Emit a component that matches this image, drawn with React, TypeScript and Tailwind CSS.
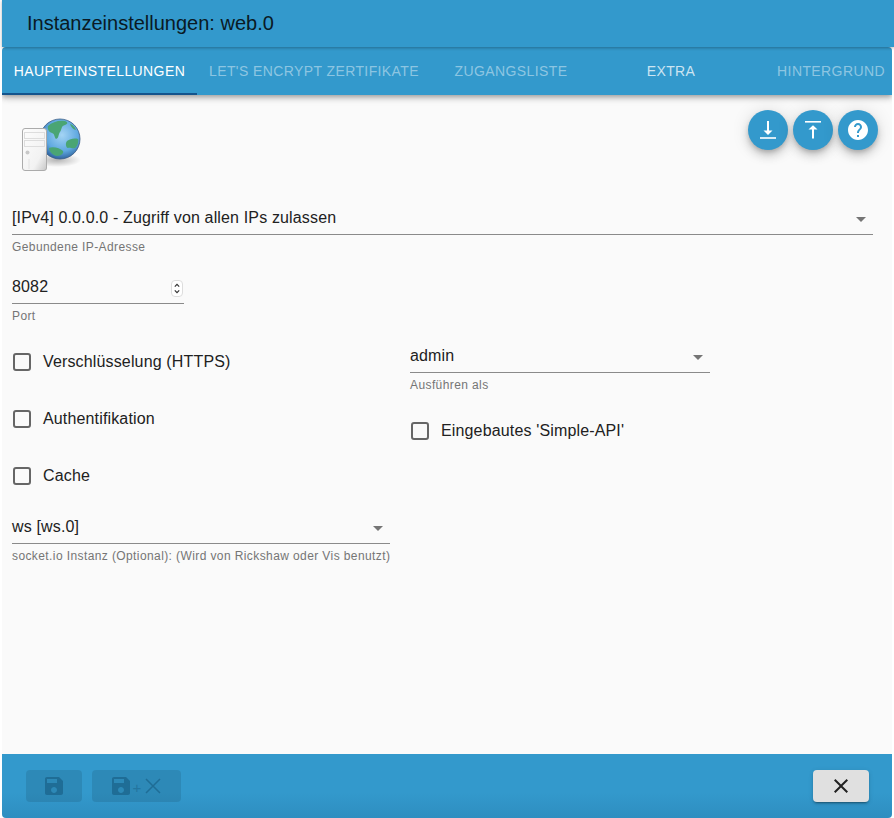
const SAVE = "M17 3H5c-1.11 0-2 .9-2 2v14c0 1.1.89 2 2 2h14c1.1 0 2-.9 2-2V7l-4-4zm-5 16c-1.66 0-3-1.34-3-3s1.34-3 3-3 3 1.34 3 3-1.34 3-3 3zm3-10H5V5h10v4z";
const CLOSE = "M19 6.41 17.59 5 12 10.59 6.41 5 5 6.41 10.59 12 5 17.59 6.41 19 12 13.41 17.59 19 19 17.59 13.41 12z";
const HELP = "M12 2C6.48 2 2 6.48 2 12s4.48 10 10 10 10-4.48 10-10S17.52 2 12 2zm1 17h-2v-2h2v2zm2.07-7.75l-.9.92C13.45 12.9 13 13.5 13 15h-2v-.5c0-1.1.45-2.1 1.17-2.83l1.24-1.26c.37-.36.59-.86.59-1.41 0-1.1-.9-2-2-2s-2 .9-2 2H8c0-2.21 1.79-4 4-4s4 1.79 4 4c0 .88-.36 1.68-.93 2.25z";

function Icon({ d, className }: { d: string; className?: string }) {
  return (
    <svg viewBox="0 0 24 24" className={className} fill="currentColor">
      <path d={d} />
    </svg>
  );
}

function Logo() {
  return (
    <svg width="60" height="56" viewBox="0 0 60 56" className="block">
      <defs>
        <radialGradient id="sea" cx="0.55" cy="0.4" r="0.62">
          <stop offset="0" stopColor="#a4d4f4" />
          <stop offset="0.65" stopColor="#5fa8e0" />
          <stop offset="1" stopColor="#2c5f9a" />
        </radialGradient>
        <linearGradient id="case" x1="0" y1="0" x2="1" y2="1">
          <stop offset="0" stopColor="#fdfdfd" />
          <stop offset="0.7" stopColor="#f2f2f2" />
          <stop offset="1" stopColor="#c6c6c6" />
        </linearGradient>
        <radialGradient id="shade" cx="0.5" cy="0.5" r="0.5">
          <stop offset="0" stopColor="#000" stopOpacity="0.28" />
          <stop offset="1" stopColor="#000" stopOpacity="0" />
        </radialGradient>
      </defs>
      <ellipse cx="36" cy="43" rx="24" ry="7" fill="url(#shade)" />
      <circle cx="39" cy="22" r="20" fill="url(#sea)" stroke="#3f5f86" strokeWidth="0.8" />
      <path d="M27 9c4-4 11-6 17-5 3 1 3 3 0 4-4 1-3 4-5 7-2 3-1 6-4 7-2-2-1-5-4-6-3-1-5-4-4-7z" fill="#4aa574" />
      <path d="M46 24c3-2 7-3 11-2 1 3-1 8-3 9-3 1-5-1-7 0-2 0-3-5-1-7z" fill="#4aa574" />
      <path d="M28 31c4-2 11 0 14 3 1 2-2 5-6 5-3 0-8-4-8-8z" fill="#4aa574" />
      <path d="M49 7c2 0 5 3 6 6-2 0-5-3-6-6z" fill="#4aa574" />
      <rect x="1.5" y="11.5" width="24" height="42" rx="2.5" fill="url(#case)" stroke="#ababab" />
      <rect x="3.5" y="15.5" width="20" height="6" fill="none" stroke="#dddddd" />
      <rect x="3.5" y="23.5" width="20" height="6" fill="none" stroke="#dddddd" />
      <circle cx="6.5" cy="35.5" r="2" fill="#c8c8c8" />
      <path d="M8 42v10" stroke="#e2e2e2" />
    </svg>
  );
}

function Field({ label, value, width, select, stepper }: { label: string; value: string; width: string; select?: boolean; stepper?: boolean }) {
  return (
    <div className={width}>
      <div className="relative h-[32px] border-b border-[#8a8a8a] flex items-center text-[16px] tracking-[0.15px] text-[#212121]">
        <span className="pb-[2px]">{value}</span>
        {select && <span className="absolute right-[7px] top-[14px] w-0 h-0 border-x-[5px] border-x-transparent border-t-[5px] border-t-[#757575]" />}
        {stepper && (
          <svg width="14" height="17" viewBox="0 0 14 17" className="absolute right-0 top-[8px]">
            <rect x="1.5" y="0.5" width="11" height="16" rx="3.5" fill="#fff" stroke="#dddddd" />
            <path d="M4.8 6.6 7 4.4l2.2 2.2M4.8 10.4 7 12.6l2.2-2.2" fill="none" stroke="#333" strokeWidth="1.2" />
          </svg>
        )}
      </div>
      <div className="mt-[4px] whitespace-nowrap text-[12px] leading-[16px] tracking-[0.4px] text-[#757575]">{label}</div>
    </div>
  );
}

function Check({ label }: { label: string }) {
  return (
    <div className="flex items-center h-[24px]">
      <span className="ml-[1px] w-[18px] h-[18px] border-2 border-[#666666] rounded-[3px]" />
      <span className="ml-[12px] text-[16px] tracking-[0.15px] text-[#212121]">{label}</span>
    </div>
  );
}

function Fab({ children }: { children: React.ReactNode }) {
  return (
    <div className="w-[40px] h-[40px] rounded-full bg-[#3399cc] text-white flex items-center justify-center shadow-[0_3px_5px_-1px_rgba(0,0,0,0.2),0_6px_10px_0_rgba(0,0,0,0.14),0_1px_18px_0_rgba(0,0,0,0.12)]">
      {children}
    </div>
  );
}

function Tab({ label, className }: { label: string; className: string }) {
  return (
    <div className={`shrink-0 h-[48px] flex items-center justify-center text-[14px] tracking-[0.4px] uppercase ${className}`}>
      {label}
    </div>
  );
}

export default function App() {
  return (
    <div className="w-[894px] h-[818px] overflow-hidden bg-white flex flex-col font-['Liberation_Sans',Arial,sans-serif]">
      <div className="relative z-20 ml-[2px] h-[47px] shrink-0 bg-[#3399cc] flex items-center pl-[25px] text-[20px] text-[#0a1a24] pb-[1px] shadow-[0_1px_3px_rgba(0,0,0,0.3)]">
        Instanzeinstellungen: web.0
      </div>
      <div className="relative ml-[2px] mr-[2px] flex-1 min-h-0 flex flex-col bg-[#fafafa] rounded-[4px] overflow-hidden">
        <div className="relative z-10 h-[48px] shrink-0 bg-[#3399cc] flex overflow-hidden shadow-[0_2px_4px_-1px_rgba(0,0,0,0.2),0_4px_5px_0_rgba(0,0,0,0.14),0_1px_10px_0_rgba(0,0,0,0.12)]">
          <Tab label="Haupteinstellungen" className="w-[195px] text-white border-b-2 border-[#14548c] pt-[2px]" />
          <Tab label="Let's Encrypt Zertifikate" className="w-[234px] text-white/45" />
          <Tab label="Zugangsliste" className="w-[160px] text-white/45" />
          <Tab label="Extra" className="w-[160px] text-white/75" />
          <Tab label="Hintergrund" className="w-[160px] text-white/45" />
        </div>
        <div className="flex-1 min-h-0 flex flex-col px-[10px]">
          <div className="flex justify-between pt-[15px] pr-[4px]">
            <div className="pl-[9px] pt-[7px]">
              <Logo />
            </div>
            <div className="flex gap-[5px]">
              <Fab>
                <svg width="24" height="24" viewBox="0 0 24 24" fill="white">
                  <path d="M11 3h2v10.5h-2z" />
                  <path d="M7.5 12.6h9L12 17z" />
                  <rect x="4" y="19.2" width="16" height="1.6" />
                </svg>
              </Fab>
              <Fab>
                <svg width="24" height="24" viewBox="0 0 24 24" fill="white">
                  <rect x="4" y="3" width="16" height="1.6" />
                  <path d="M7.5 11.6h9L12 7.2z" />
                  <path d="M11 10.5h2V20.6h-2z" />
                </svg>
              </Fab>
              <Fab>
                <Icon d={HELP} className="w-[24px] h-[24px]" />
              </Fab>
            </div>
          </div>
          <div className="mt-[30px]">
            <Field label="Gebundene IP-Adresse" value="[IPv4] 0.0.0.0 - Zugriff von allen IPs zulassen" width="w-[861px]" select />
          </div>
          <div className="mt-[17px]">
            <Field label="Port" value="8082" width="w-[172px]" stepper />
          </div>
          <div className="flex mt-[17px]">
            <div className="w-[398px] flex flex-col">
              <div className="pt-[9px]">
                <Check label="Verschlüsselung (HTTPS)" />
              </div>
              <div className="mt-[33px]">
                <Check label="Authentifikation" />
              </div>
              <div className="mt-[33px]">
                <Check label="Cache" />
              </div>
              <div className="mt-[24px]">
                <Field label="socket.io Instanz (Optional): (Wird von Rickshaw oder Vis benutzt)" value="ws [ws.0]" width="w-[378px]" select />
              </div>
            </div>
            <div className="flex flex-col">
              <Field label="Ausführen als" value="admin" width="w-[300px]" select />
              <div className="mt-[26px]">
                <Check label="Eingebautes 'Simple-API'" />
              </div>
            </div>
          </div>
        </div>
        <div className="h-[64px] shrink-0 bg-linear-to-b from-[#3399cc] from-60% to-[#2e8ec0] flex items-center pl-[24px] pr-[23px]">
          <div className="w-[56px] h-[32px] rounded-[4px] bg-black/10 flex items-center justify-center text-[#1f6d96]">
            <Icon d={SAVE} className="w-[24px] h-[24px]" />
          </div>
          <div className="ml-[10px] w-[89px] h-[32px] rounded-[4px] bg-black/10 flex items-center justify-center text-[#1f6d96]">
            <Icon d={SAVE} className="w-[24px] h-[24px]" />
            <span className="w-[8px] text-center text-[15px] leading-none mt-[2px] opacity-70">+</span>
            <svg viewBox="0 0 24 24" className="w-[24px] h-[24px]" fill="none" stroke="currentColor" strokeWidth="1.5">
              <path d="M5 5l14 14M19 5 5 19" />
            </svg>
          </div>
          <div className="ml-auto w-[56px] h-[32px] rounded-[4px] bg-[#e0e0e0] flex items-center justify-center text-[#212121] shadow-[0_3px_1px_-2px_rgba(0,0,0,0.2),0_2px_2px_0_rgba(0,0,0,0.14),0_1px_5px_0_rgba(0,0,0,0.12)]">
            <Icon d={CLOSE} className="w-[24px] h-[24px]" />
          </div>
        </div>
      </div>
    </div>
  );
}
